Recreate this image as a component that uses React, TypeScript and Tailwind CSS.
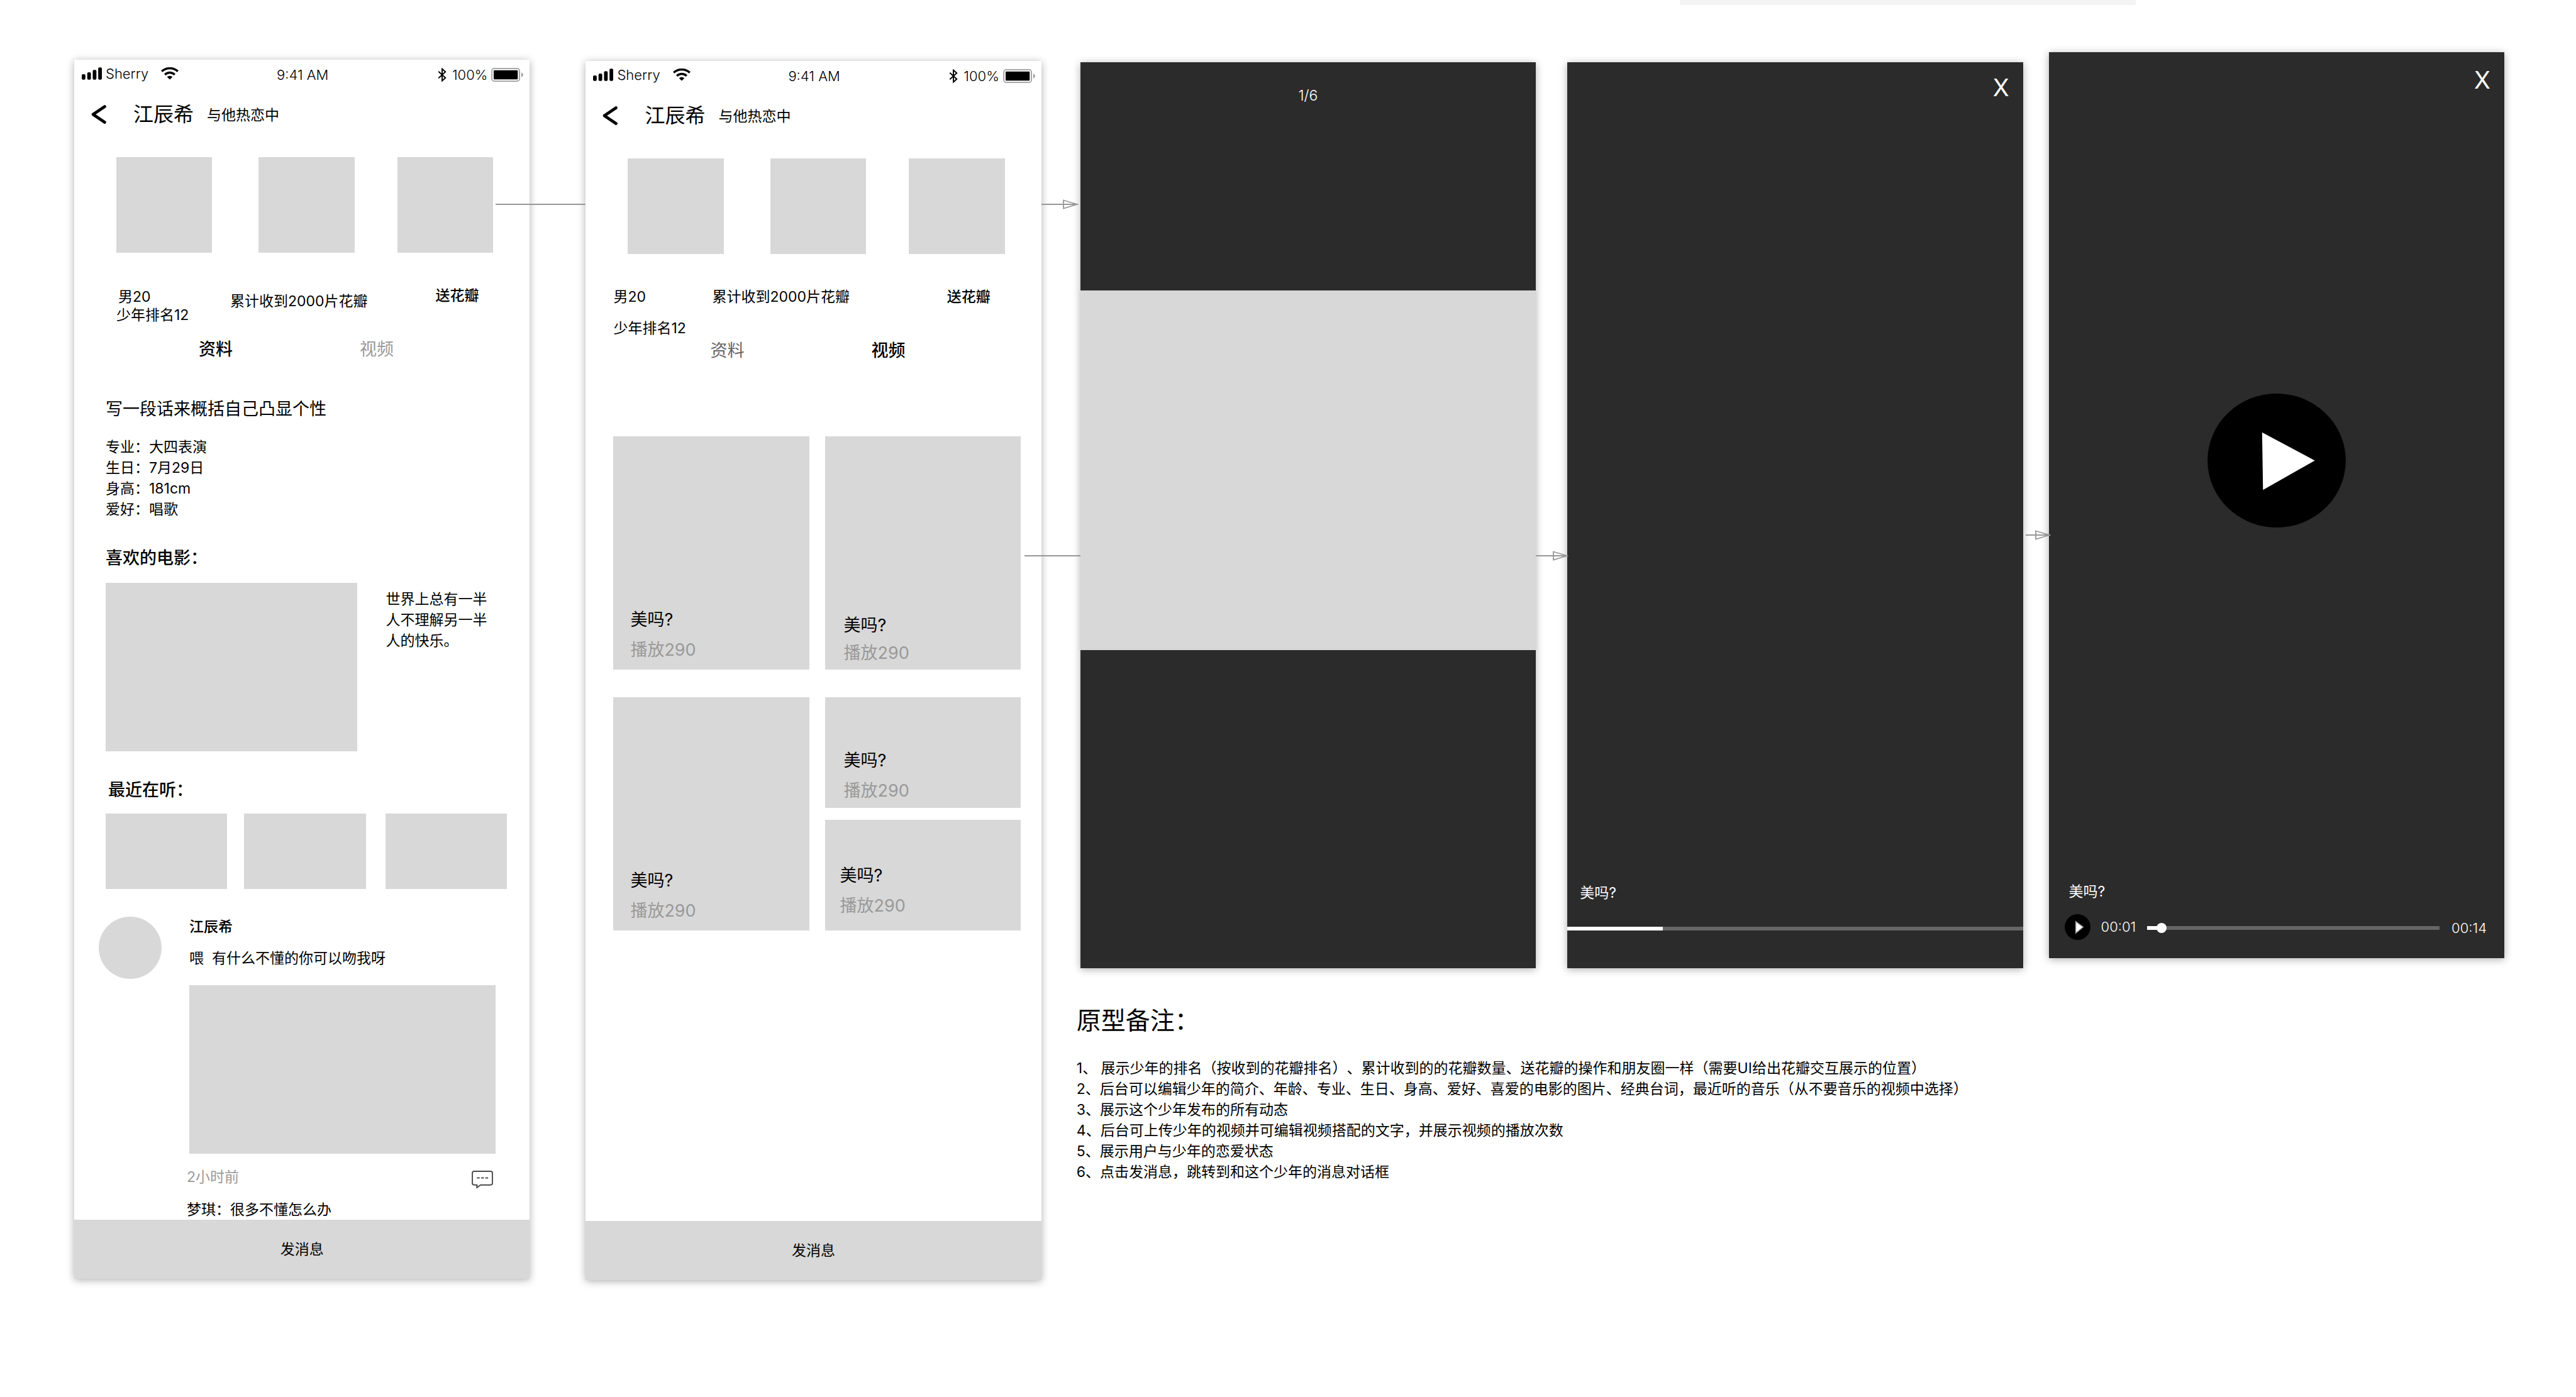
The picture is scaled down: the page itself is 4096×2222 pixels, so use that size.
import React from "react";

const block = "bg-[#d8d8d8]";
const shadow = "shadow-[0_2px_12px_rgba(0,0,0,0.32)]";

function SignalIcon() {
  return (
    <svg className="h-5 w-8" viewBox="0 0 33 20" aria-hidden="true">
      <rect x="0" y="11" width="6" height="9" rx="2" />
      <rect x="9" y="8" width="6" height="12" rx="2" />
      <rect x="18" y="4" width="6" height="16" rx="2" />
      <rect x="27" y="0" width="6" height="20" rx="2" />
    </svg>
  );
}

function WifiIcon() {
  return (
    <svg className="h-5 w-7" viewBox="0 0 28 20" aria-hidden="true">
      <g fill="none" stroke="#000" strokeWidth="3.4">
        <path d="M1.2 6.6C8.3-.1 19.700-.1 26.800 6.600" />
        <path d="M6.200 11.700C10.600 7.500 17.400 7.500 21.800 11.700" />
      </g>
      <path d="M14 19.600L9.600 15.300C12.100 13.100 15.900 13.100 18.400 15.300Z" />
    </svg>
  );
}

function BluetoothIcon() {
  return (
    <svg className="h-[22px] w-[14px]" viewBox="0 0 14 23" aria-hidden="true">
      <path d="M1 6L12.500 16.500L7 21.500V1.500L12.500 6.500L1 17" fill="none" stroke="#000" strokeWidth="2" />
    </svg>
  );
}

function BatteryIcon() {
  return (
    <svg className="h-[22px] w-[51px]" viewBox="0 0 53 23" aria-hidden="true">
      <rect x="1" y="1" width="46" height="21" rx="4" fill="none" stroke="#9b9b9b" strokeWidth="1.800" />
      <rect x="4" y="4" width="40" height="15" rx="1" />
      <path d="M50 7.500C52 8.500 53 10 53 11.500S52 14.500 50 15.500Z" fill="#9b9b9b" />
    </svg>
  );
}

function CommentIcon() {
  return (
    <svg className="h-7 w-[34px]" viewBox="0 0 35 29" fill="none" stroke="#4a4a4a" strokeWidth="2" aria-hidden="true">
      <path d="M4 1H31Q34 1 34 4V20.500Q34 23.500 31 23.500H14.500L8.500 28V23.500H4Q1 23.500 1 20.500V4Q1 1 4 1Z" />
      <path d="M8.500 12H13M15.500 12H20M22.500 12H27" />
    </svg>
  );
}

function ArrowHead() {
  return (
    <svg className="h-4 w-[25px]" viewBox="0 0 25 16" fill="none" stroke="#979797" strokeWidth="1.800" aria-hidden="true">
      <path d="M1 1.500L23 8L1 14.500Z" />
      <path d="M0 8H24" strokeWidth="2" />
    </svg>
  );
}

function Connector({ place, arrow = false }: { place: string; arrow?: boolean }) {
  return (
    <div className={`absolute z-10 flex h-4 items-center ${place}`}>
      <span className="h-0.5 flex-1 bg-[#979797]" />
      {arrow && <ArrowHead />}
    </div>
  );
}

function StatusBar() {
  return (
    <div className="grid h-[47px] grid-cols-3 items-center pr-[10px] pl-3 text-[22px] leading-[30px] font-light">
      <div className="flex items-center pb-1">
        <SignalIcon />
        <span className="ml-[6px]">Sherry</span>
        <span className="ml-5">
          <WifiIcon />
        </span>
      </div>
      <span className="text-center">9:41 AM</span>
      <div className="flex items-center justify-end">
        <BluetoothIcon />
        <span className="mr-[6px] ml-[9px]">100%</span>
        <BatteryIcon />
      </div>
    </div>
  );
}

function TitleBar() {
  return (
    <header className="mt-4 flex h-12 items-center pl-[27px]">
      <button type="button" aria-label="返回">
        <svg className="h-[30px] w-6" viewBox="0 0 24 30" fill="none" stroke="#000" strokeWidth="4.600" strokeLinecap="round" strokeLinejoin="round">
          <path d="M21.500 2.500L3 15L21.500 27.500" />
        </svg>
      </button>
      <h1 className="ml-[43px] text-[32px] leading-[48px]">江辰希</h1>
      <span className="mt-[3px] ml-[21px]">与他热恋中</span>
    </header>
  );
}

function TopPhotos() {
  return (
    <div className="mt-[44px] flex pr-[58px] pl-[67px]">
      <div className={`mr-[74px] aspect-square flex-1 ${block}`} />
      <div className={`mr-[68px] aspect-square flex-1 ${block}`} />
      <div className={`aspect-square flex-1 ${block}`} />
    </div>
  );
}

function Tabs({ active }: { active: "info" | "video" }) {
  return (
    <div role="tablist" className="flex h-10 items-center gap-[202px] pl-[198px] text-[27px]">
      <button type="button" role="tab" aria-selected={active === "info"} className={active === "info" ? "font-medium" : "text-[#666]"}>
        资料
      </button>
      <button type="button" role="tab" aria-selected={active === "video"} className={active === "video" ? "font-medium" : "text-[#999]"}>
        视频
      </button>
    </div>
  );
}

function Phone({ offset, children }: { offset: string; children: React.ReactNode }) {
  return (
    <section className={`row-span-2 flex aspect-[750/2008] flex-col self-start bg-white ${offset} ${shadow}`}>
      <StatusBar />
      <TitleBar />
      <TopPhotos />
      {children}
      <button type="button" className={`mt-auto h-[94px] w-full ${block}`}>
        发消息
      </button>
    </section>
  );
}

function ProfileScreen() {
  return (
    <Phone offset="mt-[87px]">
      <div className="mt-[54px] flex h-20 items-start pr-[81px] pl-[67px] leading-[29px]">
        <div className="w-[181px] pt-0.5">
          <p className="pl-[3px]">男20</p>
          <p>少年排名12</p>
        </div>
        <p className="flex-1 pt-[9px]">累计收到2000片花瓣</p>
        <button type="button" className="font-medium">
          送花瓣
        </button>
      </div>
      <Tabs active="info" />

      <div className="pl-[50px]">
        <p className="mt-[57px] text-[27px] leading-9">写一段话来概括自己凸显个性</p>
        <ul className="mt-[26px] leading-[33px]">
          <li>专业：大四表演</li>
          <li>生日：7月29日</li>
          <li>身高：181cm</li>
          <li>爱好：唱歌</li>
        </ul>

        <h2 className="mt-[43px] text-[27px] leading-9 font-medium">喜欢的电影：</h2>
        <div className="mt-[21px] flex gap-[45px] pr-[68px]">
          <div className={`h-[268px] flex-1 ${block}`} />
          <p className="w-[7em] pt-[10px] leading-[33px]">世界上总有一半人不理解另一半人的快乐。</p>
        </div>

        <h2 className="mt-[44px] pl-1 text-[27px] leading-9 font-medium">最近在听：</h2>
        <div className="mt-[19px] flex pr-9">
          <div className={`mr-[27px] h-[120px] flex-1 ${block}`} />
          <div className={`mr-[31px] h-[120px] flex-1 ${block}`} />
          <div className={`h-[120px] flex-1 ${block}`} />
        </div>
      </div>

      <article className="mt-[44px] flex gap-[44px] pr-[54px] pl-[39px]">
        <div className={`h-[99px] w-[100px] rounded-[50%] ${block}`} />
        <div className="flex-1 leading-[30px]">
          <h3 className="pt-px font-medium">江辰希</h3>
          <p className="mt-5 whitespace-pre">喂{"  "}有什么不懂的你可以吻我呀</p>
          <div className={`mt-7 h-[268px] ${block}`} />
          <div className="mt-[19px] -ml-1 flex h-9 items-end justify-between pr-1">
            <span className="self-center text-[#999]">2小时前</span>
            <button type="button" aria-label="评论">
              <CommentIcon />
            </button>
          </div>
          <p className="mt-[19px] -ml-1">梦琪：很多不懂怎么办</p>
        </div>
      </article>
    </Phone>
  );
}

function VideoCard({ className }: { className: string }) {
  return (
    <a href="#video" className={`flex flex-col justify-end text-[27px] leading-8 ${block} ${className}`}>
      <span>美吗?</span>
      <span className="text-[#999]">播放290</span>
    </a>
  );
}

function VideosScreen() {
  return (
    <Phone offset="mt-[89px]">
      <div className="mt-[54px] flex h-20 items-start pr-[81px] pl-[44px] leading-[29px]">
        <div className="w-[157px]">
          <p>男20</p>
          <p className="mt-[21px]">少年排名12</p>
        </div>
        <p className="flex-1">累计收到2000片花瓣</p>
        <button type="button" className="font-medium">
          送花瓣
        </button>
      </div>
      <Tabs active="video" />

      <div className="mt-[116px] grid grid-cols-2 gap-[25px] pr-[33px] pl-[44px]">
        <div className="flex flex-col gap-[44px]">
          <VideoCard className="h-[371px] gap-4 pb-[15px] pl-[27px]" />
          <VideoCard className="h-[371px] gap-4 pb-[15px] pl-[27px]" />
        </div>
        <div className="flex flex-col">
          <VideoCard className="h-[371px] gap-3 pb-[10px] pl-[30px]" />
          <VideoCard className="mt-[44px] h-[176px] gap-4 pb-[11px] pl-[30px]" />
          <VideoCard className="mt-[19px] h-[176px] gap-4 pb-[23px] pl-[24px]" />
        </div>
      </div>
    </Phone>
  );
}

function DarkBoard({ offset, children }: { offset: string; children: React.ReactNode }) {
  return (
    <section className={`flex aspect-[750/1492] flex-col self-start bg-[#2b2b2b] text-white ${offset} ${shadow}`}>{children}</section>
  );
}

function CloseButton() {
  return (
    <button type="button" aria-label="关闭" className="self-end pr-[22px] text-[38px] leading-[48px]">
      X
    </button>
  );
}

function PhotoViewer() {
  return (
    <DarkBoard offset="mt-[91px]">
      <p className="pt-[38px] text-center leading-[30px] font-light">1/6</p>
      <div className={`mt-[295px] h-[572px] ${block}`} />
    </DarkBoard>
  );
}

function VideoPlaying() {
  return (
    <DarkBoard offset="mt-[91px]">
      <div className="flex flex-col pt-4">
        <CloseButton />
      </div>
      <p className="mt-auto pl-5 leading-[30px]">美吗?</p>
      <div role="progressbar" aria-label="播放进度" aria-valuenow={21} className="mt-[39px] mb-[60px] h-[6px] bg-[#666]">
        <div className="h-full w-[21%] bg-white" />
      </div>
    </DarkBoard>
  );
}

function VideoPaused() {
  return (
    <DarkBoard offset="mt-[75px]">
      <div className="flex flex-col pt-5">
        <CloseButton />
      </div>
      <button type="button" aria-label="播放" className="mt-[475px] self-center">
        <svg className="h-[213px] w-[220px]" viewBox="0 0 228 221">
          <ellipse cx="114" cy="110.500" rx="114" ry="110.500" fill="#000" />
          <path d="M90 64L177 110.500L91.500 159Z" fill="#fff" />
        </svg>
      </button>
      <p className="mt-auto pl-8 leading-[30px]">美吗?</p>
      <div className="mt-5 mb-[29px] flex h-[42px] items-center pr-[28px] pl-[25px] text-[22px] leading-[30px] font-light">
        <button type="button" aria-label="播放">
          <svg className="h-[41px] w-[41px]" viewBox="0 0 42 42">
            <circle cx="21" cy="21" r="21" fill="#000" />
            <path d="M18 12L30 21L18 31Z" fill="#fff" stroke="#979797" strokeWidth="1.500" />
          </svg>
        </button>
        <span className="ml-[17px] w-[73px]">00:01</span>
        <input
          type="range"
          aria-label="播放位置"
          min={0}
          max={14}
          step={0.01}
          defaultValue={0.47}
          className="mt-1 h-4 min-w-0 flex-1 appearance-none bg-[linear-gradient(to_right,#fff_5%,#666_5%)] bg-[length:100%_6px] bg-center bg-no-repeat [&::-webkit-slider-thumb]:h-4 [&::-webkit-slider-thumb]:w-4 [&::-webkit-slider-thumb]:appearance-none [&::-webkit-slider-thumb]:rounded-full [&::-webkit-slider-thumb]:bg-white"
        />
        <span className="mt-1 ml-[19px]">00:14</span>
      </div>
    </DarkBoard>
  );
}

const notes = [
  "1、 展示少年的排名（按收到的花瓣排名）、累计收到的的花瓣数量、送花瓣的操作和朋友圈一样（需要UI给出花瓣交互展示的位置）",
  "2、后台可以编辑少年的简介、年龄、专业、生日、身高、爱好、喜爱的电影的图片、经典台词，最近听的音乐（从不要音乐的视频中选择）",
  "3、展示这个少年发布的所有动态",
  "4、后台可上传少年的视频并可编辑视频搭配的文字，并展示视频的播放次数",
  "5、展示用户与少年的恋爱状态",
  "6、点击发消息，跳转到和这个少年的消息对话框",
];

function Notes() {
  return (
    <section className="col-span-5 col-start-5 -ml-1.5 pt-[55px]">
      <h2 className="text-[39px] leading-[56px]">原型备注：</h2>
      <ol className="mt-8 leading-[33px]">
        {notes.map((note) => (
          <li key={note}>{note}</li>
        ))}
      </ol>
    </section>
  );
}

export default function App() {
  return (
    <main className="min-h-screen bg-white font-['Inter','Noto_Sans_CJK_SC',sans-serif] text-[23px] text-black [text-spacing-trim:space-all]" lang="zh-CN">
      <div className="mr-[700px] ml-auto h-2 w-[17.7%] bg-[#f4f4f4]" />
      <div className="grid grid-cols-[1fr_89px_1fr_62px_1fr_50px_1fr_41px_1fr] grid-rows-[auto_1fr] pr-[114px] pb-[120px] pl-[118px]">
        <ProfileScreen />
        <div className="relative">
          <Connector place="top-[309px] right-0 -left-[54px]" />
        </div>
        <VideosScreen />
        <div className="relative">
          <Connector place="top-[309px] right-[3px] left-0" arrow />
          <Connector place="top-[868px] right-0 -left-[27px]" />
        </div>
        <PhotoViewer />
        <div className="relative">
          <Connector place="top-[868px] -right-[2px] left-0" arrow />
        </div>
        <VideoPlaying />
        <div className="relative">
          <Connector place="top-[835px] -right-[3px] left-1" arrow />
        </div>
        <VideoPaused />
        <Notes />
      </div>
    </main>
  );
}
